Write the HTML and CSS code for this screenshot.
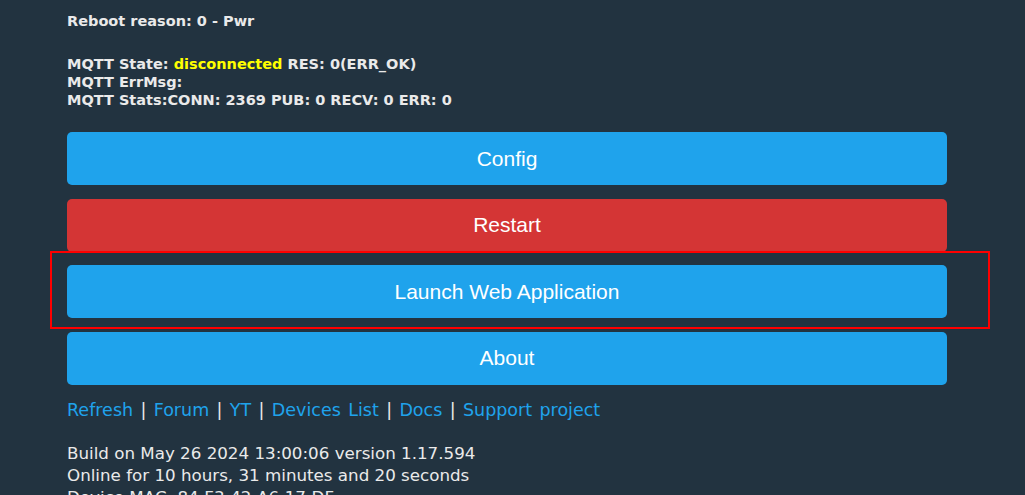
FILE: index.html
```html
<!DOCTYPE html>
<html>
<head>
<meta charset="utf-8">
<link rel="stylesheet" href="styles.css">
</head>
<body>
<div class="page">
  <div class="info">
    <p class="line">Reboot reason: 0 - Pwr</p>
    <p class="mqtt">MQTT State: <span class="warn">disconnected</span> RES: 0(ERR_OK)<br>MQTT ErrMsg:<br>MQTT Stats:CONN: 2369 PUB: 0 RECV: 0 ERR: 0</p>
  </div>
  <div class="buttons">
    <button class="btn">Config</button>
    <button class="btn red">Restart</button>
    <div class="highlight-wrap">
      <button class="btn">Launch Web Application</button>
      <div class="highlight"></div>
    </div>
    <button class="btn">About</button>
  </div>
  <p class="links"><a href="#">Refresh</a> | <a href="#">Forum</a> | <a href="#">YT</a> | <a href="#">Devices List</a> | <a href="#">Docs</a> | <a href="#">Support project</a></p>
  <p class="build">Build on May 26 2024 13:00:06 version 1.17.594<br>Online for 10 hours, 31 minutes and 20 seconds<br>Device MAC: 84:F3:42:A6:17:DF</p>
</div>
</body>
</html>
```
FILE: styles.css
```css
html, body {
  margin: 0;
  padding: 0;
  background: #223340;
  overflow: hidden;
}
.page {
  width: 880px;
  padding-left: 67px;
  padding-top: 12px;
  color: #eaeaea;
  font-family: "DejaVu Sans", Verdana, sans-serif;
}
.info {
  font-size: 14.5px;
  font-weight: bold;
  line-height: 18px;
}
.info p {
  margin: 0;
}
.mqtt {
  margin-top: 25px !important;
}
.warn {
  color: #ffff00;
}
.buttons {
  display: flex;
  flex-direction: column;
  gap: 13.5px;
  margin-top: 23px;
}
.btn {
  display: block;
  width: 100%;
  height: 53px;
  border: 0;
  border-radius: 5px;
  background: #1fa3ec;
  color: #ffffff;
  font-family: "Liberation Sans", Arial, sans-serif;
  font-size: 21px;
  padding: 0;
  margin: 0;
}
.btn.red {
  background: #d43535;
}
.highlight-wrap {
  position: relative;
}
.highlight {
  position: absolute;
  left: -17px;
  right: -43px;
  top: -14px;
  bottom: -11px;
  border: 2px solid #ff0000;
  pointer-events: none;
}
.links {
  margin: 14px 0 0;
  font-size: 17.5px;
  line-height: 22px;
  word-spacing: 1.8px;
}
.links a {
  color: #1fa3ec;
  text-decoration: none;
}
.build {
  margin: 21px 0 0;
  font-size: 16.7px;
  line-height: 22px;
}
```
